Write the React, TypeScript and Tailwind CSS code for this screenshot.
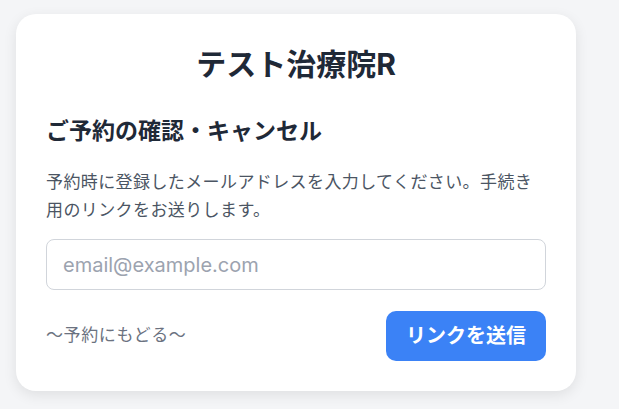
export default function App() {
  return (
    <div className="min-h-screen w-full bg-[#f4f5f7] pt-[14px] pl-4 font-['Inter','Noto_Sans_CJK_JP',sans-serif]">
      <div className="flex w-[560px] flex-col rounded-[20px] bg-white px-[30px] pt-8 pb-[30px] shadow-[0_4px_14px_rgba(0,0,0,0.09)]">
        {/* Clinic name */}
        <h1 className="text-center text-[30px] leading-9 font-bold text-[#1f2937]">
          テスト治療院R
        </h1>

        {/* Section heading */}
        <h2 className="mt-[34px] text-[23px] leading-[30px] font-bold text-[#1f2937]">
          ご予約の確認・キャンセル
        </h2>

        <p className="mt-[22px] text-[17px] leading-7 tracking-[0.4px] text-[#4b5563]">
          予約時に登録したメールアドレスを入力してください。手続き用のリンクをお送りします。
        </p>

        <input
          type="email"
          placeholder="email@example.com"
          className="mt-[15px] h-[51px] w-full rounded-lg border border-[#d1d5db] px-4 text-[20px] text-[#1f2937] placeholder:text-[#9ca3af] outline-none"
        />

        {/* Footer actions */}
        <div className="mt-[21px] flex items-center justify-between">
          <a href="#" className="text-[17px] tracking-[0.6px] text-[#6b7280]">
            〜予約にもどる〜
          </a>
          <button className="h-[50px] w-[160px] rounded-[10px] bg-[#3b82f6] text-[20px] font-bold text-white">
            リンクを送信
          </button>
        </div>
      </div>
    </div>
  );
}
